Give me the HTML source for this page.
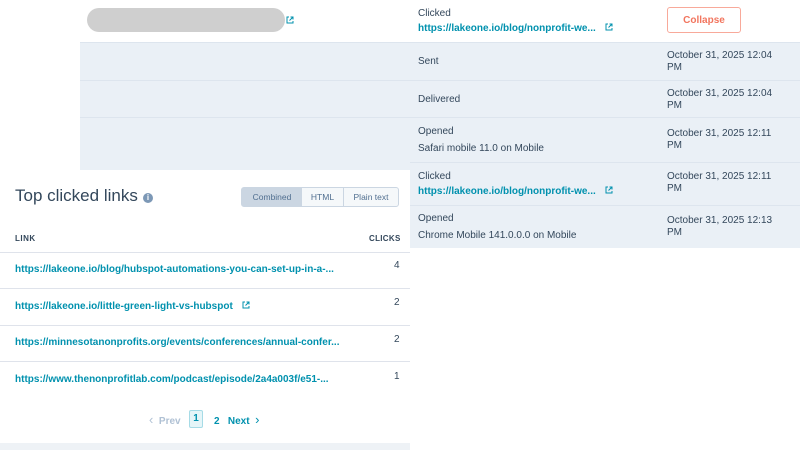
<!DOCTYPE html><html><head><style>
*{margin:0;padding:0;box-sizing:border-box}
body{width:800px;height:450px;background:#fff;font-family:"Liberation Sans",sans-serif;color:#33475b;position:relative;overflow:hidden;font-size:10px}
.a{position:absolute}
.lnk{color:#0091ae;font-weight:bold;font-size:10px;white-space:nowrap}
.row{position:absolute;left:80px;right:0;background:#eaf0f6;border-top:1px solid #dde5ee}
.ext{display:inline-block;width:8px;height:8px;margin-left:6px;vertical-align:0px}
</style></head><body>
<svg width="0" height="0" style="position:absolute"><symbol id="e" viewBox="0 0 8 8"><path d="M3 1H1v6h6V5M4.5 1H7v2.5M7 1L3.5 4.5" fill="none" stroke="#0091ae" stroke-width="1"/></symbol></svg>
<div class="a" style="left:80px;top:0;width:720px;height:42px;background:#fff"></div>
<div class="a" style="left:87px;top:8px;width:198px;height:24px;border-radius:12px;background:#cfcfcf"></div>
<svg class="a" style="left:286px;top:16px" width="8" height="8"><use href="#e"/></svg>
<div class="a" style="left:418px;top:8px">Clicked</div>
<div class="a lnk" style="left:418px;top:23px">https://lakeone.io/blog/nonprofit-we... <svg class="ext"><use href="#e"/></svg></div>
<div class="a" style="left:667px;top:7px;width:74px;height:26px;border:1px solid #f8a99a;border-radius:3px;color:#f2755e;font-weight:bold;text-align:center;line-height:25px">Collapse</div>

<div class="row" style="top:42px;height:38px"></div>
<div class="row" style="top:80px;height:37px"></div>
<div class="row" style="top:117px;height:46px"></div>
<div class="row" style="top:162px;height:43px;left:410px"></div>
<div class="row" style="top:205px;height:43px;left:410px"></div>
<div class="a" style="left:80px;top:162px;width:330px;height:8px;background:#eaf0f6"></div>

<div class="a" style="left:418px;top:56px">Sent</div>
<div class="a" style="left:418px;top:94px">Delivered</div>
<div class="a" style="left:418px;top:126px">Opened</div>
<div class="a" style="left:418px;top:143px">Safari mobile 11.0 on Mobile</div>
<div class="a" style="left:418px;top:171px">Clicked</div>
<div class="a lnk" style="left:418px;top:186px">https://lakeone.io/blog/nonprofit-we... <svg class="ext"><use href="#e"/></svg></div>
<div class="a" style="left:418px;top:213px">Opened</div>
<div class="a" style="left:418px;top:230px">Chrome Mobile 141.0.0.0 on Mobile</div>
<div class="a" style="left:667px;top:50px;line-height:12px">October 31, 2025 12:04<br>PM</div>
<div class="a" style="left:667px;top:88px;line-height:12px">October 31, 2025 12:04<br>PM</div>
<div class="a" style="left:667px;top:128px;line-height:12px">October 31, 2025 12:11<br>PM</div>
<div class="a" style="left:667px;top:171px;line-height:12px">October 31, 2025 12:11<br>PM</div>
<div class="a" style="left:667px;top:215px;line-height:12px">October 31, 2025 12:13<br>PM</div>

<div class="a" style="left:0;top:170px;width:410px;height:274px;background:#fff"></div>
<div class="a" style="left:0;top:443px;width:410px;height:7px;background:#eef2f6"></div>
<div class="a" style="left:15px;top:186px;font-size:17px;color:#33475b">Top clicked links</div>
<div class="a" style="left:143px;top:193px;width:10px;height:10px;border-radius:50%;background:#7c98b6;color:#fff;font-size:8px;font-weight:bold;text-align:center;line-height:10px">i</div>
<div class="a" style="left:241px;top:187px;width:158px;height:20px;border:1px solid #cbd6e2;border-radius:3px;background:#f5f8fa;display:flex;font-size:8.5px;line-height:18px;color:#516f90">
<div style="width:60px;background:#cbd6e2;text-align:center">Combined</div>
<div style="width:42px;text-align:center;border-right:1px solid #cbd6e2">HTML</div>
<div style="flex:1;text-align:center">Plain text</div></div>
<div class="a" style="left:15px;top:234px;font-size:8px;font-weight:bold;letter-spacing:.5px">LINK</div>
<div class="a" style="left:369px;top:234px;font-size:8px;font-weight:bold;letter-spacing:.3px">CLICKS</div>
<div class="a" style="left:0;top:252px;width:410px;border-top:1px solid #dfe3eb"></div>
<div class="a" style="left:0;top:288px;width:410px;border-top:1px solid #dfe3eb"></div>
<div class="a" style="left:0;top:325px;width:410px;border-top:1px solid #dfe3eb"></div>
<div class="a" style="left:0;top:361px;width:410px;border-top:1px solid #dfe3eb"></div>
<div class="a lnk" style="left:15px;top:264px">https://lakeone.io/blog/hubspot-automations-you-can-set-up-in-a-...</div>
<div class="a lnk" style="left:15px;top:301px">https://lakeone.io/little-green-light-vs-hubspot <svg class="ext"><use href="#e"/></svg></div>
<div class="a lnk" style="left:15px;top:337px">https://minnesotanonprofits.org/events/conferences/annual-confer...</div>
<div class="a lnk" style="left:15px;top:374px">https://www.thenonprofitlab.com/podcast/episode/2a4a003f/e51-...</div>
<div class="a" style="left:394px;top:260px">4</div>
<div class="a" style="left:394px;top:297px">2</div>
<div class="a" style="left:394px;top:334px">2</div>
<div class="a" style="left:394px;top:371px">1</div>
<div class="a" style="left:149px;top:412px;color:#b0c1d4;font-weight:bold"><span style="font-size:13px;font-weight:normal">&#8249;</span>&nbsp; Prev</div>
<div class="a" style="left:189px;top:410px;width:14px;height:18px;border:1px solid #a6dbe6;background:#e5f5f8;border-radius:2px;color:#0091ae;font-weight:bold;text-align:center;line-height:16px">1</div>
<div class="a lnk" style="left:214px;top:412px">2&nbsp;&nbsp; Next &nbsp;<span style="font-size:13px;font-weight:normal">&#8250;</span></div>
</body></html>
